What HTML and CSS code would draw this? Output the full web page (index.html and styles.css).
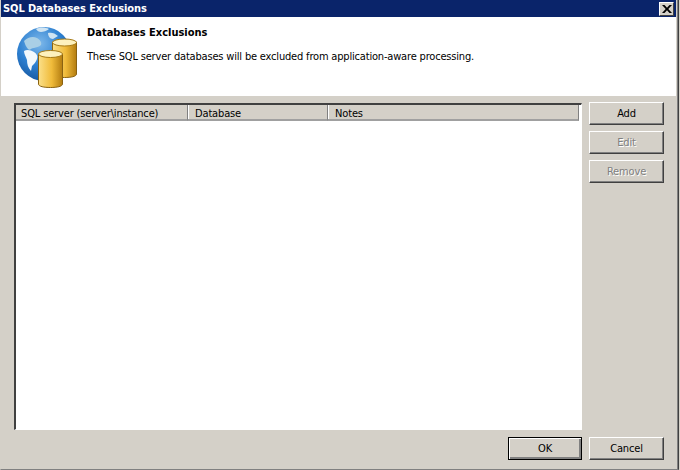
FILE: index.html
```html
<!DOCTYPE html>
<html lang="en">
<head>
<meta charset="utf-8">
<title>SQL Databases Exclusions</title>
<link rel="stylesheet" href="styles.css">
</head>
<body>
<div class="window">
  <div class="titlebar">
    <span class="title">SQL Databases Exclusions</span>
    <button class="close" aria-label="Close">
      <svg width="10" height="8" viewBox="0 0 10 8"><path d="M0 0h2.500L5 2.700 7.500 0H10L6.300 4 10 8H7.500L5 5.300 2.500 8H0l3.700-4z" fill="#000"/></svg>
    </button>
  </div>
  <div class="banner">
    <svg class="logo" width="64" height="64" viewBox="0 0 64 64">
      <defs>
        <radialGradient id="globe" cx="0.42" cy="0.3" r="0.75">
          <stop offset="0" stop-color="#7db8ea"/>
          <stop offset="0.55" stop-color="#2c7fd0"/>
          <stop offset="1" stop-color="#15549c"/>
        </radialGradient>
        <linearGradient id="can" x1="0" x2="1" y1="0" y2="0">
          <stop offset="0" stop-color="#fbe08a"/>
          <stop offset="0.55" stop-color="#f0bb3a"/>
          <stop offset="1" stop-color="#b37c10"/>
        </linearGradient>
      </defs>
      <circle cx="28" cy="30" r="27" fill="url(#globe)"/>
      <path d="M8 17c4-4 9-5 13-3 3 2 5 4 4 7-2 2-5 2-7 3-3 0-4 3-6 1-2-2-3-5-4-8z" fill="#a9cfe6"/>
      <path d="M8 27c3-2 7-1 10 1 3 2 4 4 3 7-1 3-3 5-5 7l-1 5c-3-3-4-7-4-11-1-3-3-6-3-9z" fill="#f2f8fc"/>
      <path d="M20 5c4-2 9-2 13 0-2 2-6 3-8 3-2 0-4-1-5-3zM32 9c3-1 7 0 10 3l-5 3c-3 0-5-3-5-6z" fill="#cfe4f2"/>
      <path d="M36.500 18v32c0 2.500 5.500 3.500 12 3.500s12-1 12-3.500V18z" fill="url(#can)" stroke="#8a6212"/>
      <ellipse cx="48.500" cy="18.500" rx="12" ry="3.500" fill="#fdf1bd" stroke="#a67a16"/>
      <path d="M22.500 30v30c0 2.500 5.500 3.500 12 3.500s12-1 12-3.500V30z" fill="url(#can)" stroke="#8a6212"/>
      <ellipse cx="34.500" cy="30" rx="12" ry="3.500" fill="#fdf1bd" stroke="#a67a16"/>
    </svg>
    <div class="banner-text">
      <div class="banner-title">Databases Exclusions</div>
      <div class="banner-desc">These SQL server databases will be excluded from application-aware processing.</div>
    </div>
  </div>
  <div class="body">
    <div class="main">
      <div class="list">
        <div class="list-head">
          <div class="col col-server">SQL server (server\instance)</div>
          <div class="col col-db">Database</div>
          <div class="col col-notes">Notes</div>
        </div>
      </div>
      <div class="side">
        <button class="btn">Add</button>
        <button class="btn" disabled>Edit</button>
        <button class="btn" disabled>Remove</button>
      </div>
    </div>
    <div class="footer">
      <button class="btn btn-default">OK</button>
      <button class="btn">Cancel</button>
    </div>
  </div>
</div>
</body>
</html>
```
FILE: styles.css
```css
* { box-sizing: border-box; }
html, body { margin: 0; padding: 0; }
body { width: 680px; height: 470px; overflow: hidden; background: #d4d0c8; font-family: "DejaVu Sans Condensed", "DejaVu Sans", sans-serif; font-stretch: condensed; font-size: 11px; color: #000; }
.window { width: 679px; height: 470px; display: flex; flex-direction: column; background: #d4d0c8; border-left: 1px solid #d4d0c8; border-right: 1px solid #404040; border-bottom: 1px solid #808080; box-shadow: inset -1px 0 0 #808080; padding-right: 2px; }
.titlebar { height: 17px; background: #0a246a; color: #fff; display: flex; align-items: center; justify-content: space-between; padding: 0 2px 0 2px; flex: none; }
.title { font-weight: 700; line-height: 15px; letter-spacing: -0.08px; }
.close { width: 15px; height: 14px; padding: 0; background: #d4d0c8; border: 1px solid; border-color: #fff #404040 #404040 #fff; display: flex; align-items: center; justify-content: center; }
.banner { height: 79px; flex: none; background: #fff; display: flex; padding-left: 15px; }
.logo { margin-top: 7px; flex: none; }
.banner-text { padding: 8px 0 0 7px; }
.banner-title { font-weight: 700; line-height: 16px; }
.banner-desc { margin-top: 8px; line-height: 16px; white-space: nowrap; letter-spacing: -0.18px; }
.body { flex: 1; display: flex; flex-direction: column; padding: 6px 12px 9px 13px; min-height: 0; }
.main { flex: 1; display: flex; gap: 7px; min-height: 0; padding-bottom: 7px; }
.list { width: 568px; background: #fff; border-top: 2px solid #404040; border-left: 2px solid #404040; border-right: 1px solid #fff; border-bottom: 1px solid #fff; margin-top: 1px; }
.list-head { display: flex; height: 16px; background: #d4d0c8; margin-right: 2px; }
.col { height: 16px; padding-left: 5px; padding-top: 1px; line-height: 15px; letter-spacing: -0.15px; border-right: 1px solid #808080; box-shadow: inset 1px 0 0 #fff; border-bottom: 2px solid #a0a0a0; white-space: nowrap; overflow: hidden; }
.col-server { width: 172px; box-shadow: none; }
.col-db { width: 140px; padding-left: 7px; }
.col-notes { flex: 1; padding-left: 7px; }
.side { display: flex; flex-direction: column; gap: 6px; width: 75px; }
.footer { display: flex; justify-content: flex-end; gap: 7px; height: 23px; flex: none; }
.btn { width: 75px; height: 23px; padding: 0; font: inherit; letter-spacing: -0.15px; background: #d4d0c8; color: #000; border: 1px solid; border-color: #fff #404040 #404040 #fff; box-shadow: inset -1px -1px 0 #808080; }
.btn:disabled { color: #808080; text-shadow: 1px 1px 0 #fff; }
.btn-default { width: 74px; border-color: #000; box-shadow: inset 1px 1px 0 #fff, inset -2px -2px 0 #808080; }
```
